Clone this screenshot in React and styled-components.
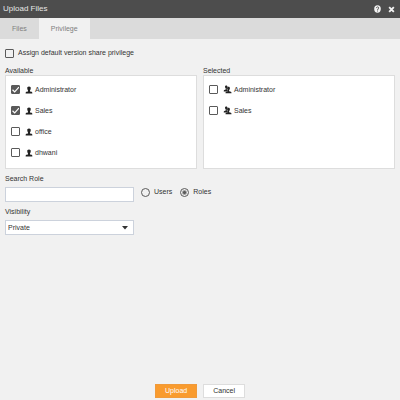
import { useState } from "react";
import styled, { createGlobalStyle } from "styled-components";

const GlobalStyle = createGlobalStyle`
  * {
    box-sizing: border-box;
  }
  body {
    margin: 0;
    background: #f1f1f1;
    color: #333;
    font-family: "Liberation Sans", Arial, sans-serif;
    font-size: 7px;
    line-height: 10px;
  }
  button, input, select {
    font: inherit;
    color: inherit;
  }
`;

const Dialog = styled.div`
  min-height: 100vh;
  display: flex;
  flex-direction: column;
`;

const TitleBar = styled.header`
  height: 18px;
  padding: 0 4px 0 3px;
  display: flex;
  align-items: center;
  background: #4d4d4d;
  color: #e6e6e6;
`;

const Title = styled.h1`
  flex: 1;
  margin: 0;
  font-size: 8px;
  font-weight: normal;
`;

const IconButton = styled.button`
  width: 10px;
  height: 10px;
  margin-left: 4px;
  padding: 0;
  border: 0;
  background: none;
  display: flex;
  align-items: center;
  justify-content: center;
`;

const TabBar = styled.nav`
  height: 21px;
  display: flex;
  background: #dbdbdb;
`;

const Tab = styled.button`
  padding: 0 12px;
  border: 0;
  background: ${(props) => (props.$active ? "#f1f1f1" : "transparent")};
  color: #808080;
`;

const Content = styled.main`
  flex: 1;
  padding: 9px 5px;
`;

const Option = styled.label`
  display: flex;
  align-items: center;
`;

const Check = styled.input`
  appearance: none;
  flex: none;
  width: 9px;
  height: 9px;
  margin: 0;
  border: 1px solid #5a5a5a;
  border-radius: 1px;
  background: #fff;
  &:checked {
    background: #5a5a5a
      url("data:image/svg+xml,%3Csvg xmlns='http://www.w3.org/2000/svg' viewBox='0 0 8 8'%3E%3Cpath d='M1 4l2 2 4-4.5' fill='none' stroke='white' stroke-width='1.1'/%3E%3C/svg%3E")
      center / 8px no-repeat;
  }
`;

const DefaultCheck = styled(Check)`
  margin-right: 4px;
  background: transparent;
`;

const Lists = styled.div`
  margin-top: 8px;
  display: grid;
  grid-template-columns: 1fr 1fr;
  gap: 6px;
`;

const Caption = styled.h2`
  margin: 0;
  font-size: 7px;
  font-weight: normal;
  line-height: 9px;
`;

const List = styled.ul`
  height: 94px;
  margin: 0;
  padding: 3px 5px;
  list-style: none;
  border: 1px solid #ddd;
  background: #fff;
`;

const Item = styled.li`
  height: 21px;
  display: flex;
  align-items: center;
  svg {
    margin: 0 2px 0 5px;
  }
`;

const Field = styled.div`
  width: 129px;
`;

const FieldLabel = styled.label`
  display: block;
  margin-bottom: 3px;
`;

const TextInput = styled.input`
  display: block;
  width: 100%;
  height: 15px;
  padding: 0 3px;
  border: 1px solid #ccd2dc;
  background: #fff;
`;

const SearchRow = styled.div`
  margin: 5px 0;
  display: flex;
  align-items: flex-end;
`;

const Radios = styled.div`
  height: 18px;
  margin-left: 7px;
  display: flex;
  gap: 8px;
`;

const RadioOption = styled(Option)`
  height: 16px;
`;

const Radio = styled.input`
  appearance: none;
  width: 9px;
  height: 9px;
  margin: 0 4px 0 0;
  border: 1px solid #5a5a5a;
  border-radius: 50%;
  &:checked {
    background: radial-gradient(circle, #5a5a5a 1px, transparent 3px);
  }
`;

const SelectBox = styled.div`
  position: relative;
  svg {
    position: absolute;
    right: 6px;
    top: 6px;
    pointer-events: none;
  }
`;

const Select = styled.select`
  appearance: none;
  display: block;
  width: 100%;
  height: 15px;
  padding: 0 2px;
  border: 1px solid #ccd2dc;
  border-radius: 0;
  background: #fff;
`;

const Footer = styled.footer`
  padding-bottom: 2px;
  display: flex;
  justify-content: center;
  gap: 6px;
`;

const Button = styled.button`
  height: 14px;
  padding: 0 9px;
  border: 1px solid ${(props) => (props.$primary ? "#f09a3a" : "#ddd")};
  background: ${(props) => (props.$primary ? "#f99b2e" : "#fff")};
  color: ${(props) => (props.$primary ? "#fff" : "#333")};
`;

const HelpIcon = () => (
  <svg width="7" height="8" viewBox="0 0 14 16" aria-hidden="true">
    <ellipse cx="7" cy="8" rx="6.6" ry="7.4" fill="#f2f2f2" />
    <path
      d="M4.8 6.2c0-3.2 4.6-3 4.6-.3C9.4 7.8 7 7.9 7 10M7 11v2"
      fill="none"
      stroke="#4d4d4d"
      strokeWidth="1.8"
    />
  </svg>
);

const CloseIcon = () => (
  <svg width="7" height="7" viewBox="0 0 12 12" aria-hidden="true">
    <path d="M2 2l8 8M10 2l-8 8" stroke="#f2f2f2" strokeWidth="3.2" />
  </svg>
);

const UserIcon = () => (
  <svg width="8" height="8" viewBox="0 0 16 16" fill="#222" aria-hidden="true">
    <path d="M8 1c2.600 0 3.700 1.500 3.500 3.700-.1 1.800-.7 3.300-1.500 4.300v1.800l3.300.7c1 .3 1.400 1.200 1.400 3.500H1.300c0-2.300.4-3.200 1.400-3.500l3.300-.7V9c-.8-1-1.400-2.500-1.500-4.300C4.300 2.500 5.400 1 8 1z" />
  </svg>
);

const GroupIcon = () => (
  <svg width="9" height="9" viewBox="0 0 18 18" fill="#222" aria-hidden="true">
    <path d="M6.500 1C8.300 1 9 2.200 9 3.600S8.400 6.200 7.500 7v2l2 1v3H1.500c0-2 .3-2.600 1-2.900l3-1V7C4.600 6.200 4 5 4 3.600S4.700 1 6.500 1z" />
    <path d="M11 3.500c2 0 2.900 1.400 2.900 3s-.9 3-1.700 3.800v2l3.600 1c.8.300 1.200 1.200 1.200 3.200H5c0-2 .4-2.900 1.200-3.200l3.600-1v-2C9 9.500 8.100 8.100 8.100 6.500s.9-3 2.900-3z" />
  </svg>
);

const roles = [
  { name: "Administrator", checked: true },
  { name: "Sales", checked: true },
  { name: "office", checked: false },
  { name: "dhwani", checked: false },
];

const selectedRoles = [
  { name: "Administrator", checked: false },
  { name: "Sales", checked: false },
];

const RoleList = ({ title, items, icon: Icon }) => (
  <section>
    <Caption>{title}</Caption>
    <List>
      {items.map((item) => (
        <Item key={item.name}>
          <Option>
            <Check type="checkbox" defaultChecked={item.checked} />
            <Icon />
            {item.name}
          </Option>
        </Item>
      ))}
    </List>
  </section>
);

export default () => {
  const [kind, setKind] = useState("Roles");
  return (
    <Dialog>
      <GlobalStyle />
      <TitleBar>
        <Title>Upload Files</Title>
        <IconButton aria-label="Help">
          <HelpIcon />
        </IconButton>
        <IconButton aria-label="Close">
          <CloseIcon />
        </IconButton>
      </TitleBar>
      <TabBar>
        <Tab>Files</Tab>
        <Tab $active>Privilege</Tab>
      </TabBar>
      <Content>
        <Option>
          <DefaultCheck type="checkbox" />
          Assign default version share privilege
        </Option>
        <Lists>
          <RoleList title="Available" items={roles} icon={UserIcon} />
          <RoleList title="Selected" items={selectedRoles} icon={GroupIcon} />
        </Lists>
        <SearchRow>
          <Field>
            <FieldLabel htmlFor="search">Search Role</FieldLabel>
            <TextInput id="search" type="text" />
          </Field>
          <Radios>
            {["Users", "Roles"].map((name) => (
              <RadioOption key={name}>
                <Radio
                  type="radio"
                  name="kind"
                  checked={kind === name}
                  onChange={() => setKind(name)}
                />
                {name}
              </RadioOption>
            ))}
          </Radios>
        </SearchRow>
        <Field>
          <FieldLabel htmlFor="visibility">Visibility</FieldLabel>
          <SelectBox>
            <Select id="visibility">
              <option>Private</option>
              <option>Public</option>
            </Select>
            <svg width="6" height="4" viewBox="0 0 6 4" aria-hidden="true">
              <path d="M0 0h6L3 3.500z" fill="#333" />
            </svg>
          </SelectBox>
        </Field>
      </Content>
      <Footer>
        <Button $primary>Upload</Button>
        <Button>Cancel</Button>
      </Footer>
    </Dialog>
  );
};
